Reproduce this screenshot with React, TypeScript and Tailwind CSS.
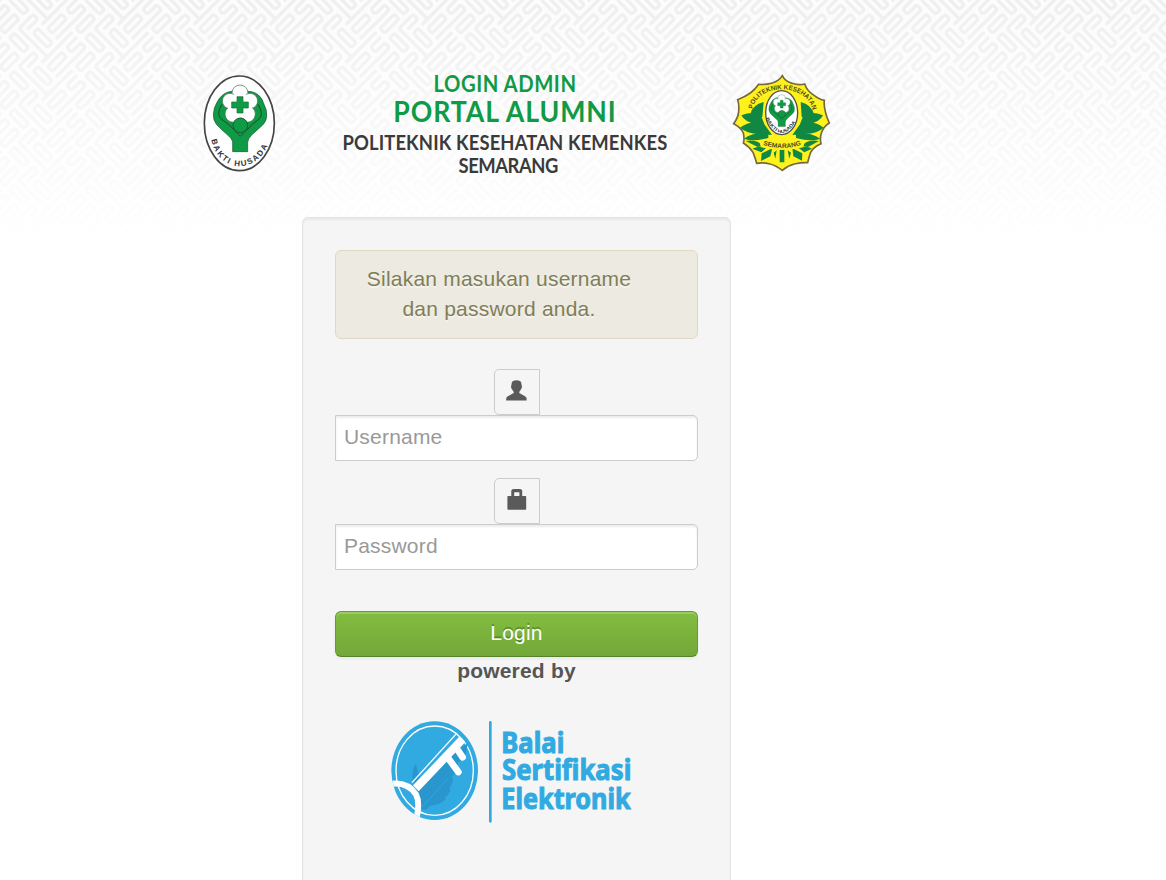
import React from "react";

const GREEN = "#0f9a45";

function Backdrop() {
  return (
    <svg className="absolute inset-x-0 top-0 h-[240px] w-full" aria-hidden="true">
      <defs>
        <pattern id="weave" width="76" height="38" patternUnits="userSpaceOnUse">
          <g fill="none" stroke="#efefef" strokeWidth="0.5" strokeLinecap="round" strokeLinejoin="round">
            {[-114, -76, -38, 0, 38, 76].map((dy) =>
              [-152, -76, 0, 76].map((dx) => (
                <g key={`${dx},${dy}`} transform={`matrix(4.75 4.75 4.75 -4.75 ${dx} ${dy})`}>
                  <rect x="5" y="-3" width="3" height="1" rx="0.35" />
                  <rect x="7" y="0" width="3" height="1" rx="0.35" />
                  <rect x="8" y="2" width="1" height="3" rx="0.35" />
                  <rect x="11" y="5" width="1" height="3" rx="0.35" />
                  <path d="M11 -1H5.4Q5 -1 5 -.6V1.6Q5 2 5.4 2Q6 2 6 1.6V0" />
                  <path d="M11 -2V4" />
                  <path d="M10 2V7.6Q10 8 9.6 8Q9 8 9 7.6V6.4Q9 6 8.6 6Q8 6 8 6.4V8" />
                </g>
              ))
            )}
          </g>
        </pattern>
        <linearGradient id="fade" x1="0" y1="0" x2="0" y2="1">
          <stop offset="0" stopColor="#fff" stopOpacity="0" />
          <stop offset="0.5" stopColor="#fff" stopOpacity="0.55" />
          <stop offset="1" stopColor="#fff" stopOpacity="1" />
        </linearGradient>
      </defs>
      <rect width="100%" height="240" fill="#fcfcfc" />
      <rect width="100%" height="240" fill="url(#weave)" />
      <rect width="100%" height="240" fill="url(#fade)" />
    </svg>
  );
}

function HusadaFigure() {
  return (
    <>
      <path
        d="M128 260V230Q126 221 114 211Q94 194 79 178Q69 164 70 148Q71 128 81 112Q92 90 112 82Q124 77 138 80L162 80Q188 76 205 90Q216 98 222 118Q232 136 230 154Q229 170 218 180L184 211Q174 221 173 232V260Z"
        fill={GREEN}
        stroke="#17502d"
        strokeWidth="2"
      />
      <path d="M96 118Q76 150 96 164Q118 178 132 194M204 118Q224 150 205 164Q184 178 172 194" fill="none" stroke="#174d2a" strokeWidth="3" />
      <g fill="#fff" stroke="#39694a" strokeWidth="2">
        <circle cx="150" cy="84" r="24" />
        <circle cx="180" cy="108" r="23" />
        <circle cx="171" cy="147" r="25" />
        <circle cx="130" cy="147" r="25" />
        <circle cx="120" cy="108" r="23" />
      </g>
      <circle cx="150" cy="121" r="37" fill="#fff" />
      <path d="M141 95h18v16h16v18h-16v15h-18v-15h-16v-18h16Z" fill={GREEN} stroke="#13743a" strokeWidth="2" />
      <circle cx="151" cy="181" r="22" fill={GREEN} stroke="#1b5b33" strokeWidth="3" />
      <path d="M128 190L151 214L174 190" fill="none" stroke="#1b5b33" strokeWidth="3" />
    </>
  );
}

function BaktiHusadaLogo() {
  return (
    <svg width="100" height="115" viewBox="0 0 300 345" role="img" aria-label="Bakti Husada">
      <ellipse cx="148" cy="175" rx="105" ry="142" fill="#fff" stroke="#454545" strokeWidth="5" />
      <HusadaFigure />
      <path id="baktiArc" d="M64 224C86 330 210 330 239 224" fill="none" />
      <text fontFamily="Liberation Sans, sans-serif" fontWeight="700" fontSize="24" fill="#333">
        <textPath href="#baktiArc" textLength="236">BAKTI HUSADA</textPath>
      </text>
    </svg>
  );
}

function PolitekkesLogo() {
  return (
    <svg width="115" height="115" viewBox="0 0 345 345" role="img" aria-label="Politeknik Kesehatan Semarang">
      <path
        d="M172 32Q180 49 201 55Q222 62 239 57Q246 77 264 89Q283 104 298 106Q296 119 301 139Q303 151 313 174Q296 184 289 204Q284 221 288 236Q265 246 257 262Q252 276 248 293Q231 292 208 297Q188 302 172 316Q152 301 135 297Q114 291 95 295Q90 276 84 262Q74 246 55 234Q59 223 55 204Q47 186 26 176Q40 157 41 139Q43 119 38 104Q59 96 76 84Q91 73 101 58Q121 60 142 54Q162 48 172 32Z"
        fill="#fff21c"
        stroke="#76683d"
        strokeWidth="5"
      />
      <g fill="#108743">
        <path d="M116 111Q82 119 75 149Q87 147 112 157ZM106 146Q76 139 49 151Q59 171 91 176L119 180ZM116 175Q78 165 45 188Q64 205 103 207L141 210ZM130 203Q80 202 57 221Q83 231 130 219Z" />
        <path d="M227 111Q260 119 268 149Q255 147 230 157ZM237 146Q268 139 294 151Q285 171 253 176L224 180ZM227 175Q266 165 296 188Q278 205 240 207L202 210ZM213 203Q262 202 286 221Q260 231 213 219Z" />
        <path d="M62 228Q94 222 115 242L98 246ZM82 251Q105 240 123 249L109 262ZM110 265L142 250L136 274L108 288ZM146 263L155 256L151 281ZM164 253h14v39h-14ZM188 256L198 263L193 281ZM202 250L232 265L231 287L205 274ZM221 249Q245 240 261 251L238 262ZM230 242Q249 222 282 228L249 246Z" />
      </g>
      <path d="M103 231Q171 250 240 231L234 247Q171 263 108 247Z" fill="#fff21c" />
      <ellipse cx="170" cy="143" rx="48" ry="66" fill="#fff" stroke="#4f5148" strokeWidth="4" />
      <g transform="translate(98 60) scale(0.48)">
        <HusadaFigure />
      </g>
      <path id="poliArc" d="M84 132C92 57 247 48 263 139" fill="none" />
      <path id="semarangArc" d="M114 239Q173 259 230 239" fill="none" />
      <path id="innerArc" d="M122 160Q169 250 220 158" fill="none" />
      <g fontFamily="Liberation Sans, sans-serif" fontWeight="700" fill="#50471f">
        <text fontSize="20">
          <textPath href="#poliArc" textLength="234" lengthAdjust="spacingAndGlyphs">POLITEKNIK KESEHATAN</textPath>
        </text>
        <text fontSize="19">
          <textPath href="#semarangArc" textLength="117" lengthAdjust="spacingAndGlyphs">SEMARANG</textPath>
        </text>
        <text fontSize="14" fill="#333">
          <textPath href="#innerArc" textLength="125" lengthAdjust="spacingAndGlyphs">BAKTI HUSADA</textPath>
        </text>
      </g>
    </svg>
  );
}

function UserIcon() {
  return (
    <svg width="21" height="21" viewBox="0 0 21 21" fill="#5a5a5a" aria-hidden="true">
      <path d="M7 1.1Q10.5-.6 14 1.1Q15.6 2.2 15.5 4.7Q16.1 5 15.8 8Q15.4 9 14.9 9.2Q14.3 11 13.3 11.8V13.1L19 16.3Q20.3 17.1 20.6 18.2V20.5H.2V18.2Q.5 17.1 1.8 16.3L7.7 13.1V11.8Q6.7 11 6.1 9.2Q5.4 9 5.2 8Q4.9 5.1 5.5 4.7Q5.4 2.2 7 1.1Z" />
    </svg>
  );
}

function LockIcon() {
  return (
    <svg width="21" height="21" viewBox="0 0 21 21" fill="#5a5a5a" aria-hidden="true">
      <path
        fillRule="evenodd"
        transform="translate(1 0)"
        d="M4.3 1.5Q4.8.1 6.5 0H13Q14.7.1 15.2 1.5V7H18.4Q19.2 7 19.2 7.8V20Q19.2 20.7 18.4 20.7H1.2Q.4 20.7 .4 20V7.8Q.4 7 1.2 7H4.3ZM7.2 3.3V7H12.4V3.3Z"
      />
    </svg>
  );
}

function BalaiLogo() {
  return (
    <svg width="265" height="120" viewBox="0 0 795 360" role="img" aria-label="Balai Sertifikasi Elektronik">
      <defs>
        <clipPath id="seal">
          <ellipse cx="164" cy="182" rx="130" ry="148" />
        </clipPath>
      </defs>
      <ellipse cx="164" cy="182" rx="130" ry="148" fill="#30aae1" />
      <ellipse cx="164" cy="182" rx="116" ry="134" fill="none" stroke="#fff" strokeWidth="4" />
      <g clipPath="url(#seal)">
        <path
          d="M107 160Q93 184 99 213L112 242L125 297L136 300L151 287Q181 285 198 267L193 263Q206 257 212 238L207 236Q218 222 219 204L214 203Q234 178 234 158Q260 144 263 100L184 151L125 226Z"
          fill="#2996cd"
        />
        <path d="M128 290L205 204" stroke="#30aae1" strokeWidth="3" />
        <path d="M96 218L230 70" stroke="#fff" strokeWidth="4" />
        <path d="M99 226L239 79L256 96L116 244Z" fill="#fff" />
        <path d="M204 144L235 186M228 112L248 142" stroke="#fff" strokeWidth="20" strokeLinecap="round" />
        <path d="M28 222Q82 213 108 253Q122 280 107 335" fill="none" stroke="#fff" strokeWidth="18" />
      </g>
      <path d="M331 37V334" stroke="#30aae1" strokeWidth="8" strokeLinecap="round" />
      <g fontFamily="Noto Sans, sans-serif" fontWeight="700" fontSize="84" fill="#30aae1" stroke="#30aae1" strokeWidth="3">
        <text x="364" y="128" textLength="189" lengthAdjust="spacingAndGlyphs">Balai</text>
        <text x="366" y="210" textLength="388" lengthAdjust="spacingAndGlyphs">Sertifikasi</text>
        <text x="364" y="297" textLength="388" lengthAdjust="spacingAndGlyphs">Elektronik</text>
      </g>
    </svg>
  );
}

function Field({ icon, label, type }: { icon: React.ReactNode; label: string; type: string }) {
  return (
    <div className="flex flex-col items-center">
      <span className="flex size-[46px] justify-center rounded-l-[5px] border border-[#ccc] bg-[#f5f5f5] pt-[10px]">{icon}</span>
      <input
        type={type}
        placeholder={label}
        className="h-[46px] w-full rounded-r-[5px] border border-[#ccc] bg-white px-2 pb-[3px] text-[21px] tracking-[0.2px] shadow-[inset_0_2px_2px_rgba(0,0,0,0.075)] outline-none placeholder:text-[#999]"
      />
    </div>
  );
}

export default function App() {
  return (
    <div className="relative h-[880px] overflow-hidden bg-white font-['Liberation_Sans',Arial,sans-serif] text-[21px] text-[#555]">
      <Backdrop />
      <div className="relative">
        <header className="flex h-[217px] items-start pl-[190px] pt-[65px]">
          <BaktiHusadaLogo />
          <div className="ml-[40px] mr-[45px] flex w-[350px] scale-x-[0.92] flex-col items-center whitespace-nowrap pt-[6px] font-['Lato',sans-serif] font-bold">
            <div className="h-[26px] text-[22px] leading-[26px] tracking-[0.6px] text-[#0f9a45]">LOGIN ADMIN</div>
            <div className="h-[30px] text-[29px] leading-[28px] tracking-[1px] text-[#0f9a45]">PORTAL ALUMNI</div>
            <div className="h-[30px] text-[20px] leading-[30px] tracking-[0.13px] text-[#3a3a3a]">POLITEKNIK KESEHATAN KEMENKES</div>
            <div className="h-[20px] pl-[7px] text-[20px] leading-[16px] tracking-[-0.5px] text-[#3a3a3a]">SEMARANG</div>
          </div>
          <PolitekkesLogo />
        </header>
        <main className="ml-[302px] h-[700px] w-[429px] rounded-[6px] border border-[#e3e3e3] bg-[#f5f5f5] px-8 pt-8 shadow-[inset_0_2px_2px_rgba(0,0,0,0.05)]">
          <div className="h-[89px] rounded-[6px] border border-[#e0d8c5] bg-[#eceae1] pl-[15px] pr-[50px] pt-[13px] text-center leading-[30px] tracking-[0.22px] text-[#817e58] [text-shadow:0_2px_0_rgba(255,255,255,0.5)]">
            Silakan masukan username
            <br />
            dan password anda.
          </div>
          <form className="mt-[30px]" onSubmit={(e) => e.preventDefault()}>
            <div className="flex flex-col gap-[17px]">
              <Field icon={<UserIcon />} label="Username" type="text" />
              <Field icon={<LockIcon />} label="Password" type="password" />
            </div>
            <button
              type="submit"
              className="mt-[41px] block h-[46px] w-full rounded-[6px] border border-[#69983a] border-b-[#56822c] bg-linear-to-b from-[#82be40] to-[#73a839] pb-[2px] tracking-[0.2px] text-white shadow-[inset_0_2px_0_rgba(255,255,255,0.2),0_2px_3px_rgba(0,0,0,0.05)] [text-shadow:0_-2px_0_rgba(0,0,0,0.25)]"
            >
              Login
            </button>
          </form>
          <div className="h-[53px] text-center font-bold leading-[28px] tracking-[0.2px]">powered by</div>
          <div className="ml-[45px]">
            <BalaiLogo />
          </div>
        </main>
      </div>
    </div>
  );
}
